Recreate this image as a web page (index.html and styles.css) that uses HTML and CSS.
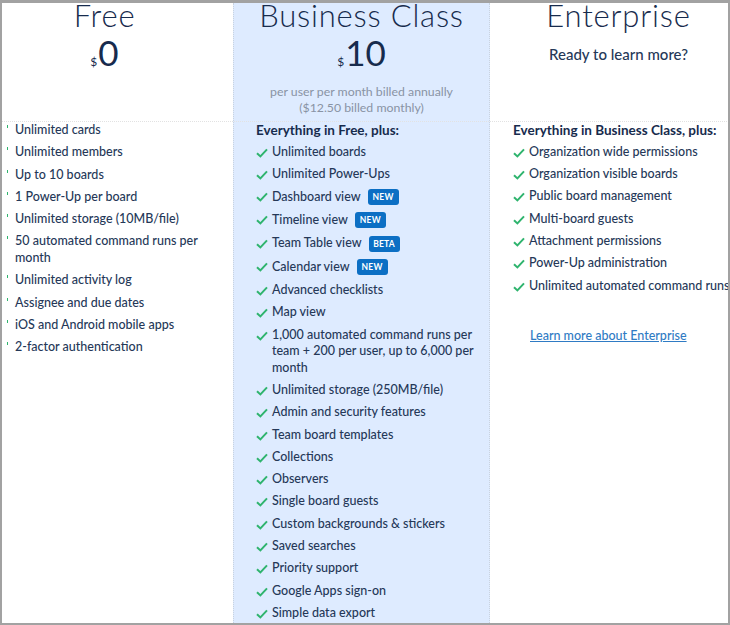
FILE: index.html
```html
<!DOCTYPE html>
<html lang="en">
<head>
<meta charset="utf-8">
<title>Plans</title>
<link rel="stylesheet" href="styles.css">
</head>
<body>
<div class="frame">
  <div class="plans">
    <section class="plan">
      <header class="plan-head">
        <h2 class="plan-title">Free</h2>
        <div class="price"><span class="cur">$</span><span class="amount">0</span></div>
      </header>
      <ul class="features stub">
        <li><span class="mark"></span><span class="txt">Unlimited cards</span></li>
        <li><span class="mark"></span><span class="txt">Unlimited members</span></li>
        <li><span class="mark"></span><span class="txt">Up to 10 boards</span></li>
        <li><span class="mark"></span><span class="txt">1 Power-Up per board</span></li>
        <li><span class="mark"></span><span class="txt">Unlimited storage (10MB/file)</span></li>
        <li><span class="mark"></span><span class="txt">50 automated command runs per month</span></li>
        <li><span class="mark"></span><span class="txt">Unlimited activity log</span></li>
        <li><span class="mark"></span><span class="txt">Assignee and due dates</span></li>
        <li><span class="mark"></span><span class="txt">iOS and Android mobile apps</span></li>
        <li><span class="mark"></span><span class="txt">2-factor authentication</span></li>
      </ul>
    </section>

    <section class="plan featured">
      <header class="plan-head">
        <h2 class="plan-title">Business Class</h2>
        <div class="price"><span class="cur">$</span><span class="amount">10</span></div>
        <p class="billing">per user per month billed annually<br>($12.50 billed monthly)</p>
      </header>
      <ul class="features">
        <li class="lead">Everything in Free, plus:</li>
        <li><svg class="check" viewBox="0 0 12 10"><path d="M1 5.2 4.4 8.4 11 1.4"/></svg><span class="txt">Unlimited boards</span></li>
        <li><svg class="check" viewBox="0 0 12 10"><path d="M1 5.2 4.4 8.4 11 1.4"/></svg><span class="txt">Unlimited Power-Ups</span></li>
        <li class="badged"><svg class="check" viewBox="0 0 12 10"><path d="M1 5.2 4.4 8.4 11 1.4"/></svg><span class="txt">Dashboard view</span><span class="badge">NEW</span></li>
        <li class="badged"><svg class="check" viewBox="0 0 12 10"><path d="M1 5.2 4.4 8.4 11 1.4"/></svg><span class="txt">Timeline view</span><span class="badge">NEW</span></li>
        <li class="badged"><svg class="check" viewBox="0 0 12 10"><path d="M1 5.2 4.4 8.4 11 1.4"/></svg><span class="txt">Team Table view</span><span class="badge">BETA</span></li>
        <li class="badged"><svg class="check" viewBox="0 0 12 10"><path d="M1 5.2 4.4 8.4 11 1.4"/></svg><span class="txt">Calendar view</span><span class="badge">NEW</span></li>
        <li><svg class="check" viewBox="0 0 12 10"><path d="M1 5.2 4.4 8.4 11 1.4"/></svg><span class="txt">Advanced checklists</span></li>
        <li><svg class="check" viewBox="0 0 12 10"><path d="M1 5.2 4.4 8.4 11 1.4"/></svg><span class="txt">Map view</span></li>
        <li><svg class="check" viewBox="0 0 12 10"><path d="M1 5.2 4.4 8.4 11 1.4"/></svg><span class="txt">1,000 automated command runs per team + 200 per user, up to 6,000 per month</span></li>
        <li><svg class="check" viewBox="0 0 12 10"><path d="M1 5.2 4.4 8.4 11 1.4"/></svg><span class="txt">Unlimited storage (250MB/file)</span></li>
        <li><svg class="check" viewBox="0 0 12 10"><path d="M1 5.2 4.4 8.4 11 1.4"/></svg><span class="txt">Admin and security features</span></li>
        <li><svg class="check" viewBox="0 0 12 10"><path d="M1 5.2 4.4 8.4 11 1.4"/></svg><span class="txt">Team board templates</span></li>
        <li><svg class="check" viewBox="0 0 12 10"><path d="M1 5.2 4.4 8.4 11 1.4"/></svg><span class="txt">Collections</span></li>
        <li><svg class="check" viewBox="0 0 12 10"><path d="M1 5.2 4.4 8.4 11 1.4"/></svg><span class="txt">Observers</span></li>
        <li><svg class="check" viewBox="0 0 12 10"><path d="M1 5.2 4.4 8.4 11 1.4"/></svg><span class="txt">Single board guests</span></li>
        <li><svg class="check" viewBox="0 0 12 10"><path d="M1 5.2 4.4 8.4 11 1.4"/></svg><span class="txt">Custom backgrounds &amp; stickers</span></li>
        <li><svg class="check" viewBox="0 0 12 10"><path d="M1 5.2 4.4 8.4 11 1.4"/></svg><span class="txt">Saved searches</span></li>
        <li><svg class="check" viewBox="0 0 12 10"><path d="M1 5.2 4.4 8.4 11 1.4"/></svg><span class="txt">Priority support</span></li>
        <li><svg class="check" viewBox="0 0 12 10"><path d="M1 5.2 4.4 8.4 11 1.4"/></svg><span class="txt">Google Apps sign-on</span></li>
        <li><svg class="check" viewBox="0 0 12 10"><path d="M1 5.2 4.4 8.4 11 1.4"/></svg><span class="txt">Simple data export</span></li>
      </ul>
    </section>

    <section class="plan">
      <header class="plan-head">
        <h2 class="plan-title">Enterprise</h2>
        <p class="ready">Ready to learn more?</p>
      </header>
      <ul class="features">
        <li class="lead">Everything in Business Class, plus:</li>
        <li><svg class="check" viewBox="0 0 12 10"><path d="M1 5.2 4.4 8.4 11 1.4"/></svg><span class="txt">Organization wide permissions</span></li>
        <li><svg class="check" viewBox="0 0 12 10"><path d="M1 5.2 4.4 8.4 11 1.4"/></svg><span class="txt">Organization visible boards</span></li>
        <li><svg class="check" viewBox="0 0 12 10"><path d="M1 5.2 4.4 8.4 11 1.4"/></svg><span class="txt">Public board management</span></li>
        <li><svg class="check" viewBox="0 0 12 10"><path d="M1 5.2 4.4 8.4 11 1.4"/></svg><span class="txt">Multi-board guests</span></li>
        <li><svg class="check" viewBox="0 0 12 10"><path d="M1 5.2 4.4 8.4 11 1.4"/></svg><span class="txt">Attachment permissions</span></li>
        <li><svg class="check" viewBox="0 0 12 10"><path d="M1 5.2 4.4 8.4 11 1.4"/></svg><span class="txt">Power-Up administration</span></li>
        <li><svg class="check" viewBox="0 0 12 10"><path d="M1 5.2 4.4 8.4 11 1.4"/></svg><span class="txt">Unlimited automated command runs</span></li>
      </ul>
      <a class="more" href="#">Learn more about Enterprise</a>
    </section>
  </div>
</div>
</body>
</html>
```
FILE: styles.css
```css
* { box-sizing: border-box; }
html, body { margin: 0; padding: 0; background: #fff; }
body { font-family: "Lato", "Noto Sans", sans-serif; color: #172b4d; }

.frame {
  width: 730px;
  height: 625px;
  border: 2px solid #a2a2a2;
  border-top-width: 3px;
  overflow: hidden;
  background: #fff;
}

.plans {
  display: grid;
  grid-template-columns: 257px 257px 257px;
  margin-left: -26px;
  height: 100%;
}

.plan { display: flex; flex-direction: column; }

.featured {
  background: #deebff;
  border-left: 1px dotted #c9d3e0;
  border-right: 1px dotted #c9d3e0;
}

.plan-head {
  height: 119px;
  border-bottom: 1px dotted #e2e2e2;
  text-align: center;
  display: flex;
  flex-direction: column;
  align-items: center;
}

.plan-title {
  margin: 0;
  font-size: 31px;
  line-height: 24px;
  font-weight: 300;
  letter-spacing: 0.8px;
  color: #172b4d;
}

.price {
  margin-top: 7px;
  display: flex;
  align-items: baseline;
  color: #172b4d;
}
.cur { font-size: 12px; margin-right: 1px; }
.amount { font-size: 35px; line-height: 36px; font-weight: 400; }

.billing {
  margin: 14px 0 0;
  font-size: 12.3px;
  line-height: 16px;
  color: #8993a4;
}

.ready {
  margin: 18px 0 0;
  font-size: 15px;
  line-height: 18px;
  font-weight: 500;
  color: #253858;
}

.features {
  list-style: none;
  margin: 0;
  padding: 0 8px 0 23px;
  font-size: 12.5px;
  line-height: 16.5px;
  font-weight: 500;
  color: #253858;
}
.featured .features { padding-left: 22px; }
.features li {
  display: flex;
  align-items: flex-start;
  margin-bottom: 5.8px;
}
.features li.lead {
  font-size: 13.5px;
  font-weight: 700;
  color: #172b4d;
  margin-bottom: 5.4px;
}
.features li.badged { align-items: center; min-height: 17.6px; margin-top: -0.4px; margin-bottom: 6.2px; }

.check {
  flex: 0 0 12px;
  width: 12px;
  height: 10px;
  margin: 4px 4px 0 0;
  fill: none;
  stroke: #2fb46e;
  stroke-width: 2;
}
.badged .check { margin-top: 0; }

.mark {
  flex: 0 0 16px;
  height: 10px;
  position: relative;
}
.mark::after {
  content: "";
  position: absolute;
  left: 8px;
  top: 3px;
  width: 1px;
  height: 3px;
  background: #2fb46e;
}

.txt { flex: 1 1 auto; }
.badged .txt { flex: 0 0 auto; }

.badge {
  margin-left: 7px;
  height: 16px;
  width: 31px;
  border-radius: 3px;
  background: #0c6fc4;
  color: #fff;
  font-size: 8.5px;
  font-weight: 700;
  line-height: 16px;
  text-align: center;
  letter-spacing: 0.2px;
}

.more {
  margin: 28px 0 0 40px;
  font-size: 12.5px;
  font-weight: 500;
  color: #2f7bc4;
  text-decoration: underline;
  align-self: flex-start;
}
```
